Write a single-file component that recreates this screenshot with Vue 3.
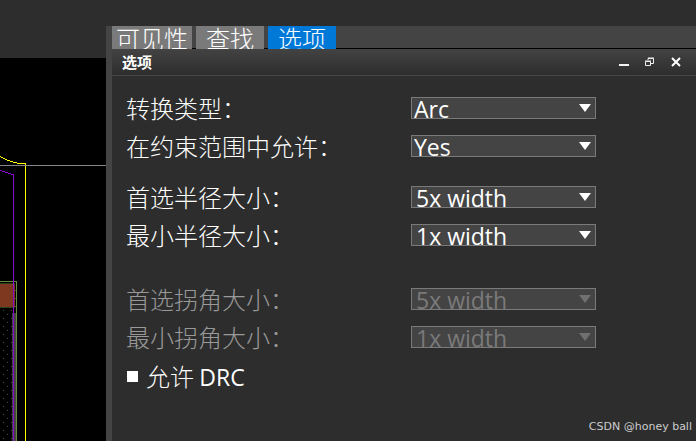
<script setup>
import { ref, reactive } from 'vue'

const tabs = ['可见性', '查找', '选项']
const active = ref('选项')
const allowDrc = ref(true)

const groups = reactive([
  [
    { id: 'type', label: '转换类型：', value: 'Arc', options: ['Arc', 'Line'] },
    { id: 'constraint', label: '在约束范围中允许：', value: 'Yes', options: ['Yes', 'No'] }
  ],
  [
    { id: 'prefRadius', label: '首选半径大小：', value: '5x width', options: ['5x width', '1x width'], inset: true },
    { id: 'minRadius', label: '最小半径大小：', value: '1x width', options: ['5x width', '1x width'], inset: true }
  ],
  [
    { id: 'prefCorner', label: '首选拐角大小：', value: '5x width', options: ['5x width', '1x width'], inset: true, disabled: true },
    { id: 'minCorner', label: '最小拐角大小：', value: '1x width', options: ['5x width', '1x width'], inset: true, disabled: true }
  ]
])
</script>

<template>
  <div class="app">
    <div class="board">
      <svg class="drawing" width="106" height="383" viewBox="0 0 106 383" shape-rendering="crispEdges" aria-hidden="true">
        <defs>
          <pattern id="dots" x="3" y="0" width="8" height="8" patternUnits="userSpaceOnUse">
            <rect x="0" y="4" width="1" height="1" fill="#3f5233" />
            <rect x="4" y="0" width="1" height="1" fill="#3f5233" />
          </pattern>
        </defs>
        <rect x="0" y="225" width="15" height="158" fill="url(#dots)" />
        <rect x="0" y="225" width="15" height="24" fill="#7e3820" />
        <path d="M0 225.500H15M0 249.500H15" stroke="#2c421c" fill="none" />
        <rect x="0" y="226" width="15" height="23" fill="url(#dots)" opacity=".3" />
        <rect x="12" y="255" width="4" height="128" fill="#444" />
        <rect x="0" y="223" width="16" height="1" fill="#668a42" />
        <rect x="16" y="223" width="1" height="160" fill="#668a42" />
        <rect x="15" y="229" width="1" height="154" fill="url(#dots)" />
        <path d="M0 112.500H2M2 113.500H5M5 114.500H8M8 115.500H11M11 116.500H13M13.500 116V383" stroke="#8808cf" fill="none" />
        <path d="M0 98.500H1M1 99.500H3M3 100.500H5M5 101.500H7M7 102.500H10M10 103.500H13M13 104.500H17M17 105.500H25M25.500 105V383" stroke="#ffff00" fill="none" />
        <rect x="0" y="107" width="106" height="1" fill="#858585" />
      </svg>
    </div>
    <section class="dock">
      <nav class="tabs">
        <button v-for="t in tabs" :key="t" type="button" class="tab" :class="{ active: t === active }" @click="active = t">{{ t }}</button>
      </nav>
      <header class="titlebar">
        <h1>选项</h1>
        <div class="controls">
          <button type="button" aria-label="最小化">
            <svg width="12" height="12" viewBox="0 0 12 12"><path d="M1 8h10v2H1z" fill="#f2f2f2" /></svg>
          </button>
          <button type="button" aria-label="还原">
            <svg width="12" height="12" viewBox="0 0 12 12" fill="none" stroke="#eee"><path d="M4 4V2.500h5.500v5H7M4 2h6M1 5h6" /><path d="M1.500 5.500h5v4h-5z" /></svg>
          </button>
          <button type="button" aria-label="关闭">
            <svg width="12" height="12" viewBox="0 0 12 12"><path d="M2 2l8 8M10 2l-8 8" stroke="#fff" stroke-width="2" /></svg>
          </button>
        </div>
      </header>
      <form class="options" @submit.prevent>
        <div v-for="(g, i) in groups" :key="i" class="group">
          <div v-for="f in g" :key="f.id" class="row" :class="{ disabled: f.disabled }">
            <label :for="f.id">{{ f.label }}</label>
            <div class="field">
              <select :id="f.id" v-model="f.value" :disabled="f.disabled" :class="{ inset: f.inset }">
                <option v-for="o in f.options" :key="o">{{ o }}</option>
              </select>
              <svg class="arrow" width="12" height="8" viewBox="0 0 12 8" aria-hidden="true"><path d="M0 0h12L6 8z" fill="currentColor" /></svg>
            </div>
          </div>
        </div>
        <label class="check"><input v-model="allowDrc" type="checkbox" /><span>允许 <span class="latin">DRC</span></span></label>
      </form>
      <footer class="credit">CSDN @honey ball</footer>
    </section>
  </div>
</template>

<style>
body {
  margin: 0;
  background: #2d2d2d;
}
</style>

<style scoped>
.app {
  display: grid;
  grid-template-columns: 106px minmax(0, 1fr);
  min-height: 100vh;
  box-sizing: border-box;
  background: #2d2d2d;
  color: #fff;
  font-family: "Noto Sans", "Noto Sans CJK SC", sans-serif;
}
.board {
  margin-top: 58px;
  background: #000;
}
.drawing {
  display: block;
}
.dock {
  display: flex;
  flex-direction: column;
  margin-top: 26px;
  border-left: 6px solid #444;
}
button {
  margin: 0;
  padding: 0;
  border: 0;
  background: none;
  color: inherit;
}
.tabs {
  display: flex;
  gap: 4px;
  height: 23px;
  background: linear-gradient(#444 22px, #000 22px);
}
.tab {
  height: 23px;
  padding: 0 4px;
  background: #7a7a7a;
  font: 300 24px/22px "Noto Sans CJK SC", sans-serif;
}
.tab:not(:first-child) {
  padding: 0 10px;
}
.tab.active {
  background: #0078d7;
}
.titlebar {
  display: flex;
  justify-content: space-between;
  align-items: center;
  height: 26px;
  padding: 0 14px 0 10px;
  border-bottom: 1px solid #484848;
  background: linear-gradient(#434343, #2d2d2d);
}
h1 {
  margin: 0;
  font: 700 15px/26px "Noto Sans CJK SC", sans-serif;
}
.controls {
  display: flex;
  gap: 14px;
}
.controls svg {
  display: block;
}
.options {
  display: flex;
  flex-direction: column;
  padding: 13px 14px 0;
}
.group:nth-child(2) {
  margin-top: 13px;
}
.group:nth-child(3) {
  margin-top: 26px;
}
.row {
  display: grid;
  grid-template-columns: 285px 185px;
  align-items: center;
  height: 38px;
  font: 300 24px/38px "Noto Sans CJK SC", sans-serif;
}
.disabled {
  color: #999;
}
.row label {
  white-space: nowrap;
}
.field {
  position: relative;
  height: 22px;
}
select {
  display: block;
  width: 100%;
  height: 22px;
  margin: 0;
  padding: 0 20px 0 2px;
  box-sizing: border-box;
  border: 1px solid #7a7a7a;
  border-radius: 0;
  background: #444;
  color: #fff;
  appearance: none;
  overflow: hidden;
  font: 400 23px/22px "Open Sans", sans-serif;
  opacity: 1;
}
select.inset {
  padding-left: 4px;
}
select:disabled {
  color: #7a7a7a;
}
.arrow {
  position: absolute;
  top: 7px;
  right: 5px;
  pointer-events: none;
}
.disabled .arrow {
  color: #707070;
}
.check {
  display: flex;
  align-items: center;
  gap: 8px;
  height: 40px;
  align-self: flex-start;
  font: 300 24px/40px "Noto Sans CJK SC", sans-serif;
}
.latin {
  font: 400 23px/40px "Open Sans", sans-serif;
}
.check input {
  width: 11px;
  height: 11px;
  margin: 0 0 0 1px;
  appearance: none;
  border: 1px solid #fff;
}
.check input:checked {
  background: #fff;
}
.credit {
  margin-top: auto;
  padding: 0 4px 4px 0;
  text-align: right;
  color: #ccc;
  font: 11px/20px "DejaVu Sans", sans-serif;
}
</style>
